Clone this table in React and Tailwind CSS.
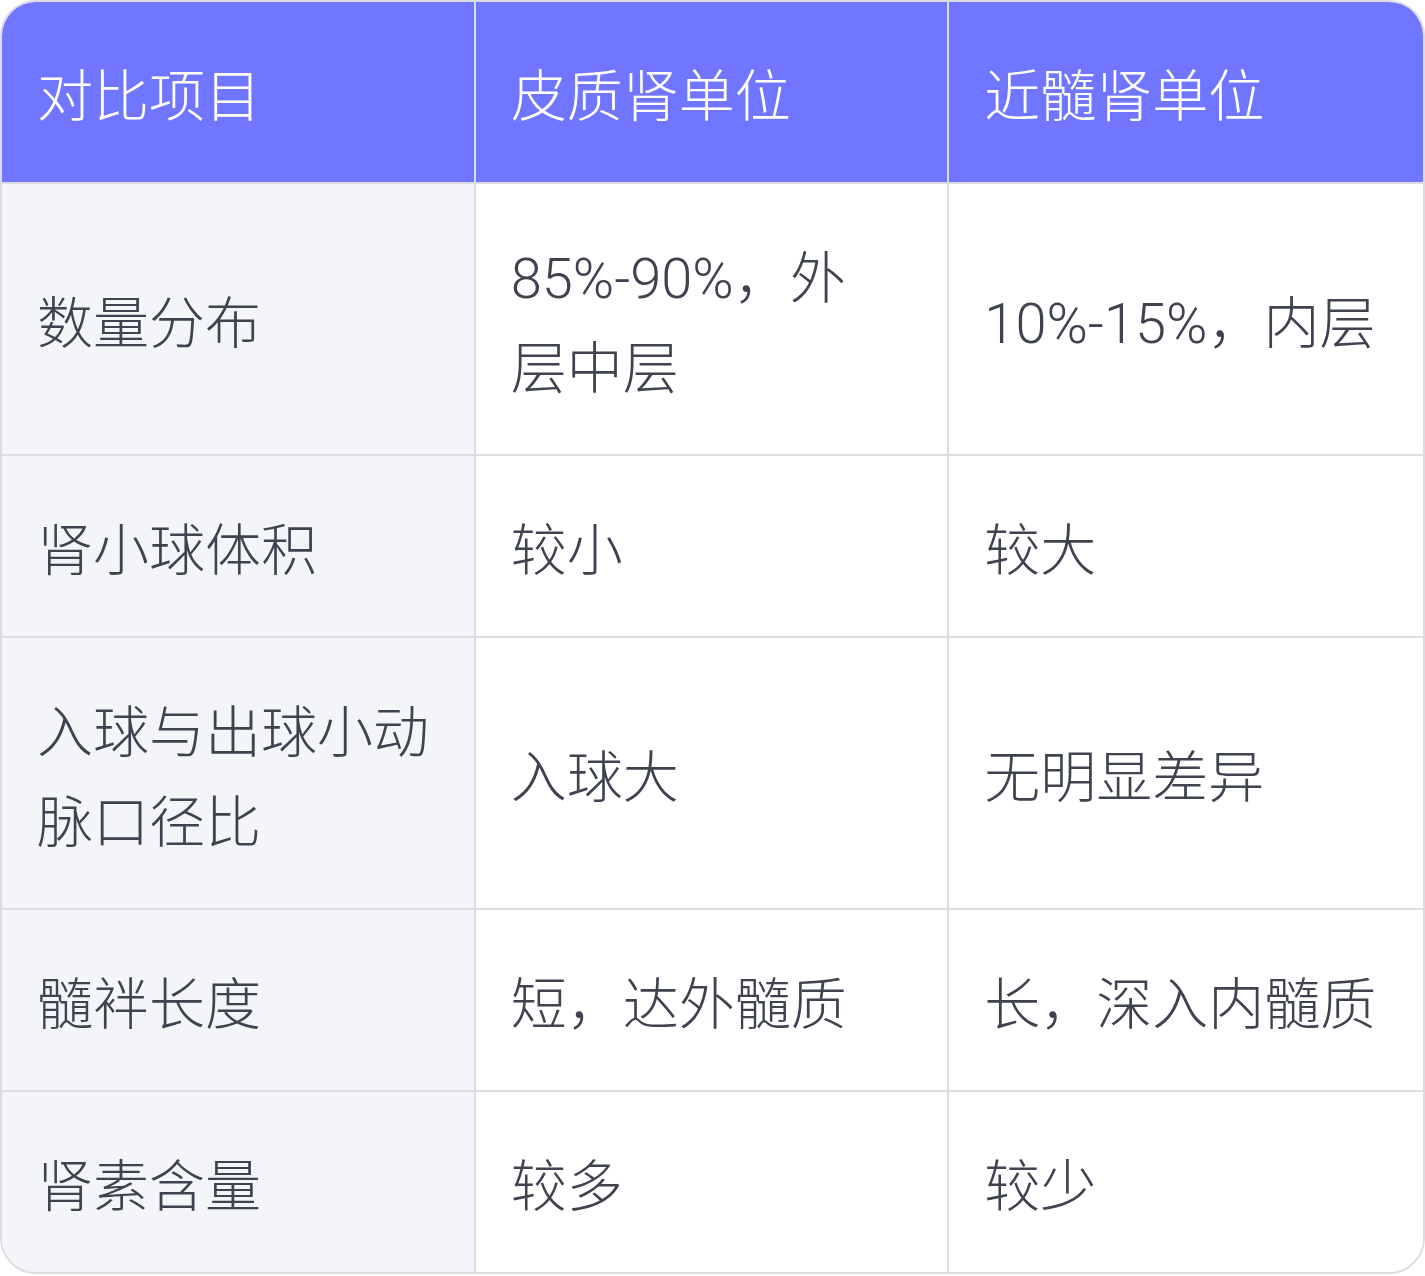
const rows = [
  ["数量分布", "85%-90%，外层中层", "10%-15%，内层"],
  ["肾小球体积", "较小", "较大"],
  ["入球与出球小动脉口径比", "入球大", "无明显差异"],
  ["髓袢长度", "短，达外髓质", "长，深入内髓质"],
  ["肾素含量", "较多", "较少"],
];

const headers = ["对比项目", "皮质肾单位", "近髓肾单位"];

const Cell = ({ children, first, head, lastCol, lastRow }) => (
  <div
    className={`flex items-center pl-[35px] pr-[33px] pt-[50px] pb-[40px] text-[56px] leading-[90px] ${
      lastCol ? "" : "border-r-2 border-[#dcdde3]"
    } ${lastRow ? "" : "border-b-2 border-[#dcdde3]"} ${
      head ? "bg-[#7076ff] text-white" : first ? "bg-[#f4f5f9] text-[#3f4350]" : "bg-white text-[#3f4350]"
    }`}
  >
    {/* the middle column wraps a touch earlier than the last one */}
    <span className={!lastCol && !first ? "max-w-[388px]" : ""}>{children}</span>
  </div>
);

export default function App() {
  return (
    <div className="w-[1425px] bg-white">
      <div
        className="grid grid-cols-3 overflow-hidden rounded-[36px] border-2 border-[#dcdde3] font-light"
        style={{ fontFamily: 'Roboto, "Noto Sans CJK SC", "Noto Sans", sans-serif' }}
      >
        {headers.map((h, i) => (
          <Cell key={h} head lastCol={i === 2}>
            {h}
          </Cell>
        ))}
        {rows.map((row, r) =>
          row.map((text, c) => (
            <Cell
              key={`${r}-${c}`}
              first={c === 0}
              lastCol={c === 2}
              lastRow={r === rows.length - 1}
            >
              {text}
            </Cell>
          ))
        )}
      </div>
    </div>
  );
}
